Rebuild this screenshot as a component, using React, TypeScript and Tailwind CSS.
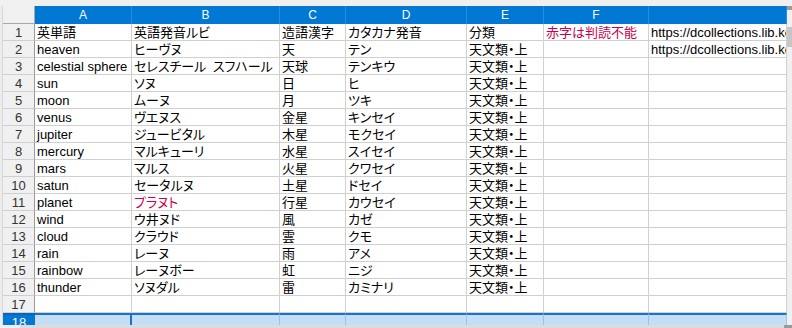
import React from "react";

// spreadsheet rows: [A, B, C, D, E, F, G], red flags by column index
type Row = { cells: string[]; red?: number[] };

const cols = ["A", "B", "C", "D", "E", "F", ""];
const url = "https://dcollections.lib.keio.ac.jp/";
const cat = "天文類・上";

const rows: Row[] = [
  { cells: ["英単語", "英語発音ルビ", "造語漢字", "カタカナ発音", "分類", "赤字は判読不能", url], red: [5] },
  { cells: ["heaven", "ヒーヴヌ", "天", "テン", cat, "", url] },
  { cells: ["celestial sphere", "セレスチール\u2002スフハール", "天球", "テンキウ", cat, "", ""] },
  { cells: ["sun", "ソヌ", "日", "ヒ", cat, "", ""] },
  { cells: ["moon", "ムーヌ", "月", "ツキ", cat, "", ""] },
  { cells: ["venus", "ヴエヌス", "金星", "キンセイ", cat, "", ""] },
  { cells: ["jupiter", "ジュービタル", "木星", "モクセイ", cat, "", ""] },
  { cells: ["mercury", "マルキューリ", "水星", "スイセイ", cat, "", ""] },
  { cells: ["mars", "マルス", "火星", "クワセイ", cat, "", ""] },
  { cells: ["satun", "セータルヌ", "土星", "ドセイ", cat, "", ""] },
  { cells: ["planet", "プラヌト", "行星", "カウセイ", cat, "", ""], red: [1] },
  { cells: ["wind", "ウ井ヌド", "風", "カゼ", cat, "", ""] },
  { cells: ["cloud", "クラウド", "雲", "クモ", cat, "", ""] },
  { cells: ["rain", "レーヌ", "雨", "アメ", cat, "", ""] },
  { cells: ["rainbow", "レーヌボー", "虹", "ニジ", cat, "", ""] },
  { cells: ["thunder", "ソヌダル", "雷", "カミナリ", cat, "", ""] },
  { cells: ["", "", "", "", "", "", ""] },
];

export default function App() {
  return (
    <div
      className="w-[792px] h-[328px] overflow-hidden bg-[#f0f0f0] flex flex-col text-[13px] text-black [font-feature-settings:'palt']"
      style={{ fontFamily: '"Liberation Sans", "Noto Sans CJK JP", sans-serif' }}
    >
      {/* top strip */}
      <div className="h-[6px] shrink-0 bg-[#f0f0f0]" />

      <div className="flex flex-1 min-h-0">
        {/* cut-off toolbar edge */}
        <div className="w-[3px] shrink-0 bg-[#ececec] border-r border-[#d8d8d8]" />

        {/* sheet grid */}
        <div className="grid grid-cols-[32px_97px_148px_66px_121px_77px_105px_138px] grid-rows-[18px_repeat(17,17px)_12px] bg-white">
          {/* corner */}
          <div className="bg-[#f0f0f0] border-r border-b border-[#a8a8a8]" />
          {cols.map((c, i) => (
            <div
              key={"h" + i}
              className="bg-[#0078d4] text-white text-[12px] flex items-center justify-center border-r border-[#2a8ae0] leading-none"
            >
              {c}
            </div>
          ))}

          {rows.map((r, ri) => (
            <React.Fragment key={ri}>
              <div className="bg-[#f0f0f0] text-[#333] flex items-center justify-center border-r border-r-[#9a9a9a] border-b border-b-[#cfcfcf] leading-none">
                {ri + 1}
              </div>
              {r.cells.map((t, ci) => (
                <div
                  key={ci}
                  className={
                    "flex items-center pl-[2px] pt-[1px] whitespace-nowrap border-r border-b border-[#d0d0d0] leading-none " +
                    (ci === 6 ? "overflow-hidden " : "overflow-visible ") +
                    (r.red?.includes(ci) ? "text-[#c8004a]" : "")
                  }
                >
                  {t}
                </div>
              ))}
            </React.Fragment>
          ))}

          {/* selected row 18 */}
          <div className="bg-[#0078d4] text-white flex justify-center pt-[1px] leading-none border-t-2 border-[#0a64b8]">
            18
          </div>
          <div className="bg-[#c4dff5] border-t-2 border-t-[#1a73c8] border-r-2 border-r-[#1a73c8]" />
          {[0, 1, 2, 3, 4, 5].map((i) => (
            <div key={"s" + i} className="bg-[#c4dff5] border-t-2 border-t-[#1a73c8] border-r border-r-[#9cc3e6]" />
          ))}
        </div>

        {/* vertical scrollbar */}
        <div className="w-[5px] shrink-0 bg-[#f0f0f0] flex flex-col">
          <div className="h-[4px] bg-[#9a9a9a]" />
          <div className="h-[17px]" />
          <div className="h-[20px] bg-[#c6c6c6]" />
          <div className="flex-1" />
        </div>
      </div>

      {/* horizontal scrollbar */}
      <div className="h-[3px] shrink-0 flex bg-[#f0f0f0]">
        <div className="w-[20px]" />
        <div className="flex-1 bg-[#dcdcdc]" />
        <div className="w-[8px] bg-[#9a9a9a]" />
      </div>
    </div>
  );
}
